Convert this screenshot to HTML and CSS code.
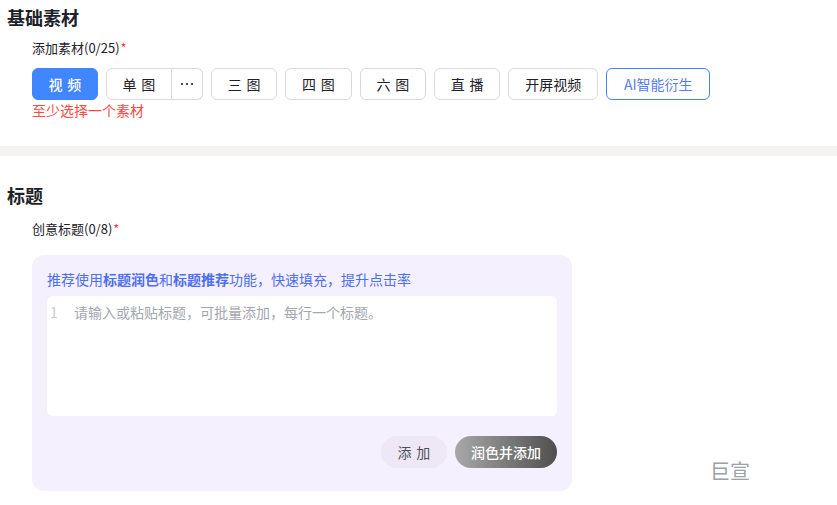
FILE: index.html
```html
<!DOCTYPE html>
<html lang="zh-CN">
<head>
    <meta charset="UTF-8">
    <meta name="viewport" content="width=device-width, initial-scale=1.0">
    <title>创意编辑</title>
    <link rel="stylesheet" href="styles.css">
</head>
<body>
    <div class="section first">
        <h2>基础素材</h2>
        <div class="field">
            <div class="label">添加素材(0/25)<span class="req">*</span></div>
            <div class="btn-row">
                <button class="btn primary two">视频</button>
                <div class="btn-group">
                    <button class="btn two">单图</button>
                    <button class="btn more" aria-label="更多">
                        <svg width="14" height="4" viewBox="0 0 14 4"><circle cx="2" cy="2" r="1.1" fill="#1d2129"/><circle cx="7" cy="2" r="1.1" fill="#1d2129"/><circle cx="12" cy="2" r="1.1" fill="#1d2129"/></svg>
                    </button>
                </div>
                <button class="btn two">三图</button>
                <button class="btn two">四图</button>
                <button class="btn two">六图</button>
                <button class="btn two">直播</button>
                <button class="btn wide">开屏视频</button>
                <button class="btn ai">AI智能衍生</button>
            </div>
            <div class="error">至少选择一个素材</div>
        </div>
    </div>

    <div class="band"></div>

    <div class="section">
        <h2>标题</h2>
        <div class="field">
            <div class="label second">创意标题(0/8)<span class="req">*</span></div>
            <div class="title-row">
                <div class="title-box">
                    <div class="tip">推荐使用<b>标题润色</b>和<b>标题推荐</b>功能，快速填充，提升点击率</div>
                    <div class="editor">
                        <span class="line-no">1</span>
                        <span class="placeholder">请输入或粘贴标题，可批量添加，每行一个标题。</span>
                    </div>
                    <div class="box-actions">
                        <button class="pill light two">添加</button>
                        <button class="pill dark">润色并添加</button>
                    </div>
                </div>
                <span class="mark">巨宣</span>
            </div>
        </div>
    </div>
</body>
</html>
```

FILE: styles.css
```css
body { margin: 0; background: #fff; font-family: "Noto Sans CJK SC", "Noto Sans", sans-serif; color: #1d2129; }
.section { padding: 26px 0 0 7px; }
.section.first { padding-top: 4px; padding-bottom: 26px; }
h2 { margin: 0; font-size: 18px; line-height: 26px; font-weight: 700; color: #1d2129; }
.field { padding-left: 25px; }
.label { margin-top: 8px; font-size: 13px; line-height: 20px; }
.label.second { margin-top: 11px; }
.req { color: #f53f3f; margin-left: 1px; }

.btn-row { display: flex; gap: 8px; margin-top: 10px; }
.btn { box-sizing: border-box; width: 66.34px; height: 32px; padding: 0; border: 1px solid #d9d9d9; border-radius: 6px; background: #fff; color: #1d2129; font-family: inherit; font-size: 14px; white-space: nowrap; cursor: pointer; }
.two { letter-spacing: 0.34em; text-indent: 0.34em; }
.btn.primary { width: 66px; background: #4086ff; border-color: #4086ff; color: #fff; font-weight: 500; }
.btn-group { display: flex; }
.btn-group .btn:first-child { width: 66px; border-radius: 6px 0 0 6px; }
.btn-group .btn.more { display: flex; align-items: center; justify-content: center; width: 31px; border-left: none; border-radius: 0 6px 6px 0; }
.btn.wide { width: 90px; }
.btn.ai { width: 104px; border-color: #4086ff; color: #5b7cf6; }
.error { color: #f54a45; font-size: 14px; line-height: 20px; }

.band { height: 10px; background: #f4f3f1; }

.title-row { display: flex; margin-top: 16px; margin-bottom: 13px; }
.title-box { width: 510px; padding: 14px 15px 23px; background: #f5f0fe; border-radius: 12px; }
.tip { color: #4e6ef2; font-size: 14px; line-height: 20px; }
.tip b { font-weight: 600; }
.editor { display: flex; height: 120px; margin-top: 7px; padding: 6px 0 0 3px; box-sizing: border-box; background: #fff; border-radius: 6px; font-size: 14px; line-height: 20px; }
.line-no { width: 24px; color: #c8cbd1; }
.placeholder { color: #a3a7ae; }
.box-actions { display: flex; justify-content: flex-end; gap: 8px; margin-top: 20px; }
.pill { height: 32px; border: none; border-radius: 16px; font-family: inherit; font-size: 14px; cursor: pointer; }
.pill.light { width: 66px; background: #ede7f6; color: #4e5059; }
.pill.dark { width: 102px; background: linear-gradient(90deg, #a8a8a8, #4f4f4f); color: #fff; font-weight: 500; }
.mark { align-self: flex-end; margin: 0 0 6px 138px; font-size: 20px; line-height: 28px; color: #9ba1a9; }
```
